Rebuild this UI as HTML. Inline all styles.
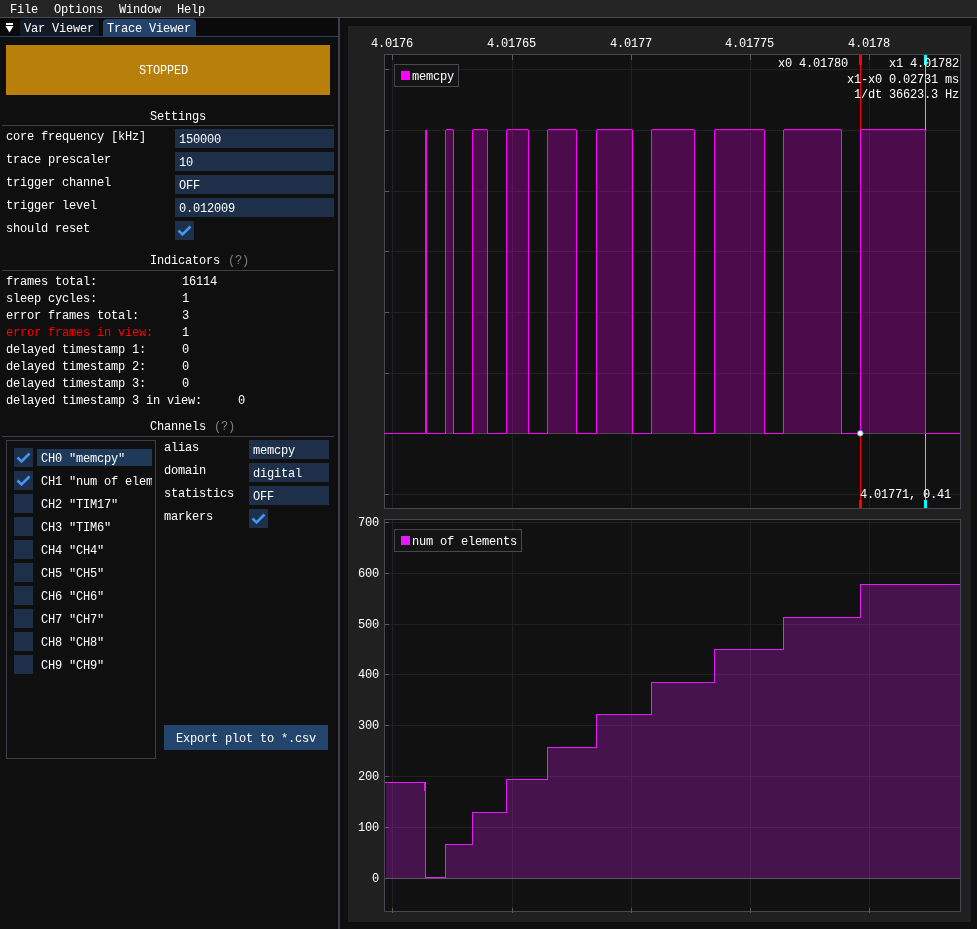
<!DOCTYPE html>
<html><head><meta charset="utf-8"><style>
html,body{margin:0;padding:0;width:977px;height:929px;overflow:hidden;background:#0f0f0f;}
body{position:relative;}
body div{position:absolute;box-sizing:border-box;}
.t{position:absolute;font-family:"Liberation Mono",monospace;font-size:12px;letter-spacing:-0.2px;line-height:13px;color:#fff;white-space:pre;}
</style></head><body><div style="left:0;top:0;width:977px;height:929px;will-change:transform;background:#0f0f0f">
<div style="left:0px;top:0px;width:977px;height:17px;background:#242424;"></div>
<div style="left:0px;top:17px;width:977px;height:1px;background:#494952;"></div>
<span class="t" style="left:10px;top:4px;">File</span>
<span class="t" style="left:54px;top:4px;">Options</span>
<span class="t" style="left:119px;top:4px;">Window</span>
<span class="t" style="left:177px;top:4px;">Help</span>
<div style="left:0px;top:18px;width:338px;height:18px;background:#0a0a0a;"></div>
<div style="left:0px;top:37px;width:338px;height:892px;background:#0f0f0f;"></div>
<div style="left:6px;top:23px;width:7px;height:2px;background:#fff;"></div>
<svg style="position:absolute;left:0;top:0" width="40" height="40"><polygon points="5.5,26 13.5,26 9.5,32.5" fill="#fff"/></svg>
<div style="left:20px;top:19px;width:79px;height:17px;background:#121a26;border-radius:4px 4px 0 0"></div>
<div style="left:103px;top:19px;width:93px;height:17px;background:#23436c;border-radius:4px 4px 0 0"></div>
<span class="t" style="left:24px;top:23px;">Var Viewer</span>
<span class="t" style="left:107px;top:23px;">Trace Viewer</span>
<div style="left:0px;top:36px;width:338px;height:1px;background:#23436c;"></div>
<div style="left:338px;top:18px;width:2px;height:911px;background:#3e3e48;"></div>
<div style="left:6px;top:45px;width:324px;height:50px;background:#b8800a;"></div>
<span class="t" style="left:139px;top:65px;">STOPPED</span>
<span class="t" style="left:150px;top:111px;">Settings</span>
<div style="left:2px;top:125px;width:332px;height:1px;background:#3e3e47;"></div>
<span class="t" style="left:6px;top:131px;">core frequency [kHz]</span>
<div style="left:175px;top:129px;width:159px;height:19px;background:#1d2f49;"></div>
<span class="t" style="left:179px;top:134px;">150000</span>
<span class="t" style="left:6px;top:154px;">trace prescaler</span>
<div style="left:175px;top:152px;width:159px;height:19px;background:#1d2f49;"></div>
<span class="t" style="left:179px;top:157px;">10</span>
<span class="t" style="left:6px;top:177px;">trigger channel</span>
<div style="left:175px;top:175px;width:159px;height:19px;background:#1d2f49;"></div>
<span class="t" style="left:179px;top:180px;">OFF</span>
<span class="t" style="left:6px;top:200px;">trigger level</span>
<div style="left:175px;top:198px;width:159px;height:19px;background:#1d2f49;"></div>
<span class="t" style="left:179px;top:203px;">0.012009</span>
<span class="t" style="left:6px;top:223px;">should reset</span>
<div style="left:175px;top:221px;width:19px;height:19px;background:#1d2f49;"></div>
<svg style="position:absolute;left:175px;top:221px" width="19" height="19"><polyline points="3.5,9.5 7.5,13.5 15.5,5.5" fill="none" stroke="#4296fa" stroke-width="2.6"/></svg>
<span class="t" style="left:150px;top:255px;">Indicators</span>
<span class="t" style="left:228px;top:255px;color:#808080;">(?)</span>
<div style="left:2px;top:270px;width:332px;height:1px;background:#3e3e47;"></div>
<span class="t" style="left:6px;top:276px;">frames total:</span>
<span class="t" style="left:182px;top:276px;">16114</span>
<span class="t" style="left:6px;top:293px;">sleep cycles:</span>
<span class="t" style="left:182px;top:293px;">1</span>
<span class="t" style="left:6px;top:310px;">error frames total:</span>
<span class="t" style="left:182px;top:310px;">3</span>
<span class="t" style="left:6px;top:327px;color:#ff0000;">error frames in view:</span>
<span class="t" style="left:182px;top:327px;">1</span>
<span class="t" style="left:6px;top:344px;">delayed timestamp 1:</span>
<span class="t" style="left:182px;top:344px;">0</span>
<span class="t" style="left:6px;top:361px;">delayed timestamp 2:</span>
<span class="t" style="left:182px;top:361px;">0</span>
<span class="t" style="left:6px;top:378px;">delayed timestamp 3:</span>
<span class="t" style="left:182px;top:378px;">0</span>
<span class="t" style="left:6px;top:395px;">delayed timestamp 3 in view:</span>
<span class="t" style="left:238px;top:395px;">0</span>
<span class="t" style="left:150px;top:421px;">Channels</span>
<span class="t" style="left:214px;top:421px;color:#808080;">(?)</span>
<div style="left:2px;top:436px;width:332px;height:1px;background:#3e3e47;"></div>
<div style="left:6px;top:440px;width:150px;height:319px;border:1px solid #3e3e47;"></div>
<div style="left:37px;top:449px;width:115px;height:17px;background:#1f3958;"></div>
<div style="left:14px;top:448px;width:19px;height:19px;background:#1d2f49;"></div>
<svg style="position:absolute;left:14px;top:448px" width="19" height="19"><polyline points="3.5,9.5 7.5,13.5 15.5,5.5" fill="none" stroke="#4296fa" stroke-width="2.6"/></svg>
<div style="left:37px;top:448px;width:115px;height:19px;overflow:hidden">
<span class="t" style="left:4px;top:5px">CH0 &quot;memcpy&quot;</span></div>
<div style="left:14px;top:471px;width:19px;height:19px;background:#1d2f49;"></div>
<svg style="position:absolute;left:14px;top:471px" width="19" height="19"><polyline points="3.5,9.5 7.5,13.5 15.5,5.5" fill="none" stroke="#4296fa" stroke-width="2.6"/></svg>
<div style="left:37px;top:471px;width:115px;height:19px;overflow:hidden">
<span class="t" style="left:4px;top:5px">CH1 &quot;num of elements&quot;</span></div>
<div style="left:14px;top:494px;width:19px;height:19px;background:#1d2f49;"></div>
<div style="left:37px;top:494px;width:115px;height:19px;overflow:hidden">
<span class="t" style="left:4px;top:5px">CH2 &quot;TIM17&quot;</span></div>
<div style="left:14px;top:517px;width:19px;height:19px;background:#1d2f49;"></div>
<div style="left:37px;top:517px;width:115px;height:19px;overflow:hidden">
<span class="t" style="left:4px;top:5px">CH3 &quot;TIM6&quot;</span></div>
<div style="left:14px;top:540px;width:19px;height:19px;background:#1d2f49;"></div>
<div style="left:37px;top:540px;width:115px;height:19px;overflow:hidden">
<span class="t" style="left:4px;top:5px">CH4 &quot;CH4&quot;</span></div>
<div style="left:14px;top:563px;width:19px;height:19px;background:#1d2f49;"></div>
<div style="left:37px;top:563px;width:115px;height:19px;overflow:hidden">
<span class="t" style="left:4px;top:5px">CH5 &quot;CH5&quot;</span></div>
<div style="left:14px;top:586px;width:19px;height:19px;background:#1d2f49;"></div>
<div style="left:37px;top:586px;width:115px;height:19px;overflow:hidden">
<span class="t" style="left:4px;top:5px">CH6 &quot;CH6&quot;</span></div>
<div style="left:14px;top:609px;width:19px;height:19px;background:#1d2f49;"></div>
<div style="left:37px;top:609px;width:115px;height:19px;overflow:hidden">
<span class="t" style="left:4px;top:5px">CH7 &quot;CH7&quot;</span></div>
<div style="left:14px;top:632px;width:19px;height:19px;background:#1d2f49;"></div>
<div style="left:37px;top:632px;width:115px;height:19px;overflow:hidden">
<span class="t" style="left:4px;top:5px">CH8 &quot;CH8&quot;</span></div>
<div style="left:14px;top:655px;width:19px;height:19px;background:#1d2f49;"></div>
<div style="left:37px;top:655px;width:115px;height:19px;overflow:hidden">
<span class="t" style="left:4px;top:5px">CH9 &quot;CH9&quot;</span></div>
<span class="t" style="left:164px;top:442px;">alias</span>
<div style="left:249px;top:440px;width:80px;height:19px;background:#1d2f49;"></div>
<span class="t" style="left:253px;top:445px;">memcpy</span>
<span class="t" style="left:164px;top:465px;">domain</span>
<div style="left:249px;top:463px;width:80px;height:19px;background:#1d2f49;"></div>
<span class="t" style="left:253px;top:468px;">digital</span>
<span class="t" style="left:164px;top:488px;">statistics</span>
<div style="left:249px;top:486px;width:80px;height:19px;background:#1d2f49;"></div>
<span class="t" style="left:253px;top:491px;">OFF</span>
<span class="t" style="left:164px;top:511px;">markers</span>
<div style="left:249px;top:509px;width:19px;height:19px;background:#1d2f49;"></div>
<svg style="position:absolute;left:249px;top:509px" width="19" height="19"><polyline points="3.5,9.5 7.5,13.5 15.5,5.5" fill="none" stroke="#4296fa" stroke-width="2.6"/></svg>
<div style="left:164px;top:725px;width:164px;height:25px;background:#23456d;"></div>
<span class="t" style="left:176px;top:733px;">Export plot to *.csv</span>
<div style="left:340px;top:18px;width:637px;height:911px;background:#0f0f0f;"></div>
<div style="left:348px;top:26px;width:623px;height:896px;background:#202020;"></div>
<svg style="position:absolute;left:0;top:0" width="977" height="929" shape-rendering="crispEdges"><rect x="384" y="54" width="577" height="455" fill="#474750"/><rect x="385" y="55" width="575" height="453" fill="#111111"/><rect x="392" y="55" width="1" height="453" fill="#212121"/><rect x="512" y="55" width="1" height="453" fill="#212121"/><rect x="631" y="55" width="1" height="453" fill="#212121"/><rect x="750" y="55" width="1" height="453" fill="#212121"/><rect x="869" y="55" width="1" height="453" fill="#212121"/><rect x="385" y="69" width="575" height="1" fill="#212121"/><rect x="385" y="130" width="575" height="1" fill="#212121"/><rect x="385" y="191" width="575" height="1" fill="#212121"/><rect x="385" y="251" width="575" height="1" fill="#212121"/><rect x="385" y="312" width="575" height="1" fill="#212121"/><rect x="385" y="373" width="575" height="1" fill="#212121"/><rect x="385" y="433" width="575" height="1" fill="#212121"/><rect x="385" y="494" width="575" height="1" fill="#212121"/><rect x="392" y="55" width="1" height="5" fill="#5a5a5a"/><rect x="512" y="55" width="1" height="5" fill="#5a5a5a"/><rect x="631" y="55" width="1" height="5" fill="#5a5a5a"/><rect x="750" y="55" width="1" height="5" fill="#5a5a5a"/><rect x="869" y="55" width="1" height="5" fill="#5a5a5a"/><rect x="385" y="69" width="4" height="1" fill="#5a5a5a"/><rect x="385" y="130" width="4" height="1" fill="#5a5a5a"/><rect x="385" y="191" width="4" height="1" fill="#5a5a5a"/><rect x="385" y="251" width="4" height="1" fill="#5a5a5a"/><rect x="385" y="312" width="4" height="1" fill="#5a5a5a"/><rect x="385" y="373" width="4" height="1" fill="#5a5a5a"/><rect x="385" y="433" width="4" height="1" fill="#5a5a5a"/><rect x="385" y="494" width="4" height="1" fill="#5a5a5a"/><rect x="860" y="55" width="1" height="453" fill="#ff0000"/><rect x="859" y="55" width="3" height="10" fill="#ff0000"/><rect x="859" y="500" width="3" height="8" fill="#ff0000"/><rect x="925" y="55" width="1" height="453" fill="#00ffff"/><rect x="924" y="55" width="3" height="10" fill="#00ffff"/><rect x="924" y="500" width="3" height="8" fill="#00ffff"/><rect x="425" y="130" width="2" height="304" fill="#ff00ff"/><rect x="446" y="130" width="7" height="303" fill="#ff00ff" fill-opacity="0.25"/><rect x="446" y="433" width="7" height="1" fill="#4a4a4a"/><rect x="446" y="129" width="7" height="1" fill="#ff00ff"/><rect x="445" y="130" width="1" height="304" fill="#ff00ff"/><rect x="453" y="130" width="1" height="304" fill="#ff00ff"/><rect x="473" y="130" width="14" height="303" fill="#ff00ff" fill-opacity="0.25"/><rect x="473" y="433" width="14" height="1" fill="#4a4a4a"/><rect x="473" y="129" width="14" height="1" fill="#ff00ff"/><rect x="472" y="130" width="1" height="304" fill="#ff00ff"/><rect x="487" y="130" width="1" height="304" fill="#ff00ff"/><rect x="507" y="130" width="21" height="303" fill="#ff00ff" fill-opacity="0.25"/><rect x="507" y="433" width="21" height="1" fill="#4a4a4a"/><rect x="507" y="129" width="21" height="1" fill="#ff00ff"/><rect x="506" y="130" width="1" height="304" fill="#ff00ff"/><rect x="528" y="130" width="1" height="304" fill="#ff00ff"/><rect x="548" y="130" width="28" height="303" fill="#ff00ff" fill-opacity="0.25"/><rect x="548" y="433" width="28" height="1" fill="#4a4a4a"/><rect x="548" y="129" width="28" height="1" fill="#ff00ff"/><rect x="547" y="130" width="1" height="304" fill="#ff00ff"/><rect x="576" y="130" width="1" height="304" fill="#ff00ff"/><rect x="597" y="130" width="35" height="303" fill="#ff00ff" fill-opacity="0.25"/><rect x="597" y="433" width="35" height="1" fill="#4a4a4a"/><rect x="597" y="129" width="35" height="1" fill="#ff00ff"/><rect x="596" y="130" width="1" height="304" fill="#ff00ff"/><rect x="632" y="130" width="1" height="304" fill="#ff00ff"/><rect x="652" y="130" width="42" height="303" fill="#ff00ff" fill-opacity="0.25"/><rect x="652" y="433" width="42" height="1" fill="#4a4a4a"/><rect x="652" y="129" width="42" height="1" fill="#ff00ff"/><rect x="651" y="130" width="1" height="304" fill="#ff00ff"/><rect x="694" y="130" width="1" height="304" fill="#ff00ff"/><rect x="715" y="130" width="49" height="303" fill="#ff00ff" fill-opacity="0.25"/><rect x="715" y="433" width="49" height="1" fill="#4a4a4a"/><rect x="715" y="129" width="49" height="1" fill="#ff00ff"/><rect x="714" y="130" width="1" height="304" fill="#ff00ff"/><rect x="764" y="130" width="1" height="304" fill="#ff00ff"/><rect x="784" y="130" width="57" height="303" fill="#ff00ff" fill-opacity="0.25"/><rect x="784" y="433" width="57" height="1" fill="#4a4a4a"/><rect x="784" y="129" width="57" height="1" fill="#ff00ff"/><rect x="783" y="130" width="1" height="304" fill="#ff00ff"/><rect x="841" y="130" width="1" height="304" fill="#ff00ff"/><rect x="861" y="130" width="64" height="303" fill="#ff00ff" fill-opacity="0.25"/><rect x="861" y="433" width="64" height="1" fill="#4a4a4a"/><rect x="861" y="129" width="64" height="1" fill="#ff00ff"/><rect x="860" y="130" width="1" height="304" fill="#ff00ff"/><rect x="925" y="130" width="1" height="304" fill="#ff00ff"/><rect x="384" y="433" width="42" height="1" fill="#ff00ff"/><rect x="426" y="433" width="20" height="1" fill="#ff00ff"/><rect x="453" y="433" width="20" height="1" fill="#ff00ff"/><rect x="487" y="433" width="20" height="1" fill="#ff00ff"/><rect x="528" y="433" width="20" height="1" fill="#ff00ff"/><rect x="576" y="433" width="21" height="1" fill="#ff00ff"/><rect x="632" y="433" width="20" height="1" fill="#ff00ff"/><rect x="694" y="433" width="21" height="1" fill="#ff00ff"/><rect x="764" y="433" width="20" height="1" fill="#ff00ff"/><rect x="841" y="433" width="20" height="1" fill="#ff00ff"/><rect x="925" y="433" width="35" height="1" fill="#ff00ff"/><rect x="394" y="64" width="65" height="23" fill="#474750"/><rect x="395" y="65" width="63" height="21" fill="#141414"/><rect x="401" y="71" width="9" height="9" fill="#ff00ff"/><rect x="384" y="519" width="577" height="393" fill="#474750"/><rect x="385" y="520" width="575" height="391" fill="#111111"/><rect x="392" y="520" width="1" height="391" fill="#212121"/><rect x="512" y="520" width="1" height="391" fill="#212121"/><rect x="631" y="520" width="1" height="391" fill="#212121"/><rect x="750" y="520" width="1" height="391" fill="#212121"/><rect x="869" y="520" width="1" height="391" fill="#212121"/><rect x="385" y="522" width="575" height="1" fill="#212121"/><rect x="385" y="573" width="575" height="1" fill="#212121"/><rect x="385" y="624" width="575" height="1" fill="#212121"/><rect x="385" y="674" width="575" height="1" fill="#212121"/><rect x="385" y="725" width="575" height="1" fill="#212121"/><rect x="385" y="776" width="575" height="1" fill="#212121"/><rect x="385" y="827" width="575" height="1" fill="#212121"/><rect x="385" y="878" width="575" height="1" fill="#212121"/><rect x="392" y="908" width="1" height="5" fill="#5a5a5a"/><rect x="512" y="908" width="1" height="5" fill="#5a5a5a"/><rect x="631" y="908" width="1" height="5" fill="#5a5a5a"/><rect x="750" y="908" width="1" height="5" fill="#5a5a5a"/><rect x="869" y="908" width="1" height="5" fill="#5a5a5a"/><rect x="385" y="522" width="4" height="1" fill="#5a5a5a"/><rect x="385" y="573" width="4" height="1" fill="#5a5a5a"/><rect x="385" y="624" width="4" height="1" fill="#5a5a5a"/><rect x="385" y="674" width="4" height="1" fill="#5a5a5a"/><rect x="385" y="725" width="4" height="1" fill="#5a5a5a"/><rect x="385" y="776" width="4" height="1" fill="#5a5a5a"/><rect x="385" y="827" width="4" height="1" fill="#5a5a5a"/><rect x="385" y="878" width="4" height="1" fill="#5a5a5a"/><rect x="386" y="783" width="40" height="95" fill="#e61aff" fill-opacity="0.25"/><rect x="446" y="845" width="27" height="33" fill="#e61aff" fill-opacity="0.25"/><rect x="473" y="813" width="34" height="65" fill="#e61aff" fill-opacity="0.25"/><rect x="507" y="780" width="41" height="98" fill="#e61aff" fill-opacity="0.25"/><rect x="548" y="748" width="49" height="130" fill="#e61aff" fill-opacity="0.25"/><rect x="597" y="715" width="55" height="163" fill="#e61aff" fill-opacity="0.25"/><rect x="652" y="683" width="63" height="195" fill="#e61aff" fill-opacity="0.25"/><rect x="715" y="650" width="69" height="228" fill="#e61aff" fill-opacity="0.25"/><rect x="784" y="618" width="77" height="260" fill="#e61aff" fill-opacity="0.25"/><rect x="861" y="585" width="99" height="293" fill="#e61aff" fill-opacity="0.25"/><rect x="385" y="878" width="575" height="1" fill="#5a5a5a"/><rect x="385" y="782" width="41" height="1" fill="#e61aff"/><rect x="425" y="877" width="21" height="1" fill="#e61aff"/><rect x="425" y="782" width="1" height="96" fill="#e61aff"/><rect x="445" y="844" width="28" height="1" fill="#e61aff"/><rect x="445" y="844" width="1" height="34" fill="#e61aff"/><rect x="472" y="812" width="35" height="1" fill="#e61aff"/><rect x="472" y="812" width="1" height="33" fill="#e61aff"/><rect x="506" y="779" width="42" height="1" fill="#e61aff"/><rect x="506" y="779" width="1" height="34" fill="#e61aff"/><rect x="547" y="747" width="50" height="1" fill="#e61aff"/><rect x="547" y="747" width="1" height="33" fill="#e61aff"/><rect x="596" y="714" width="56" height="1" fill="#e61aff"/><rect x="596" y="714" width="1" height="34" fill="#e61aff"/><rect x="651" y="682" width="64" height="1" fill="#e61aff"/><rect x="651" y="682" width="1" height="33" fill="#e61aff"/><rect x="714" y="649" width="70" height="1" fill="#e61aff"/><rect x="714" y="649" width="1" height="34" fill="#e61aff"/><rect x="783" y="617" width="78" height="1" fill="#e61aff"/><rect x="783" y="617" width="1" height="33" fill="#e61aff"/><rect x="860" y="584" width="100" height="1" fill="#e61aff"/><rect x="860" y="584" width="1" height="34" fill="#e61aff"/><rect x="424" y="783" width="1" height="8" fill="#e61aff"/><rect x="394" y="529" width="128" height="23" fill="#474750"/><rect x="395" y="530" width="126" height="21" fill="#141414"/><rect x="401" y="536" width="9" height="9" fill="#e61aff"/></svg>
<svg style="position:absolute;left:0;top:0" width="977" height="929"><circle cx="860.3" cy="433.3" r="2.9" fill="#ffffff" stroke="#5a78b4" stroke-width="0.9"/></svg>
<span class="t" style="left:371px;top:38px;">4.0176</span>
<span class="t" style="left:487px;top:38px;">4.01765</span>
<span class="t" style="left:610px;top:38px;">4.0177</span>
<span class="t" style="left:725px;top:38px;">4.01775</span>
<span class="t" style="left:848px;top:38px;">4.0178</span>
<span class="t" style="left:778px;top:58px;">x0 4.01780</span>
<span class="t" style="left:889px;top:58px;">x1 4.01782</span>
<span class="t" style="left:847px;top:74px;">x1-x0 0.02731 ms</span>
<span class="t" style="left:854px;top:89px;">1/dt 36623.3 Hz</span>
<span class="t" style="left:860px;top:489px;">4.01771, 0.41</span>
<span class="t" style="left:412px;top:71px;">memcpy</span>
<span class="t" style="left:412px;top:536px;">num of elements</span>
<span class="t" style="left:358px;top:517px;">700</span>
<span class="t" style="left:358px;top:568px;">600</span>
<span class="t" style="left:358px;top:619px;">500</span>
<span class="t" style="left:358px;top:669px;">400</span>
<span class="t" style="left:358px;top:720px;">300</span>
<span class="t" style="left:358px;top:771px;">200</span>
<span class="t" style="left:358px;top:822px;">100</span>
<span class="t" style="left:372px;top:873px;">0</span>
</div></body></html>
